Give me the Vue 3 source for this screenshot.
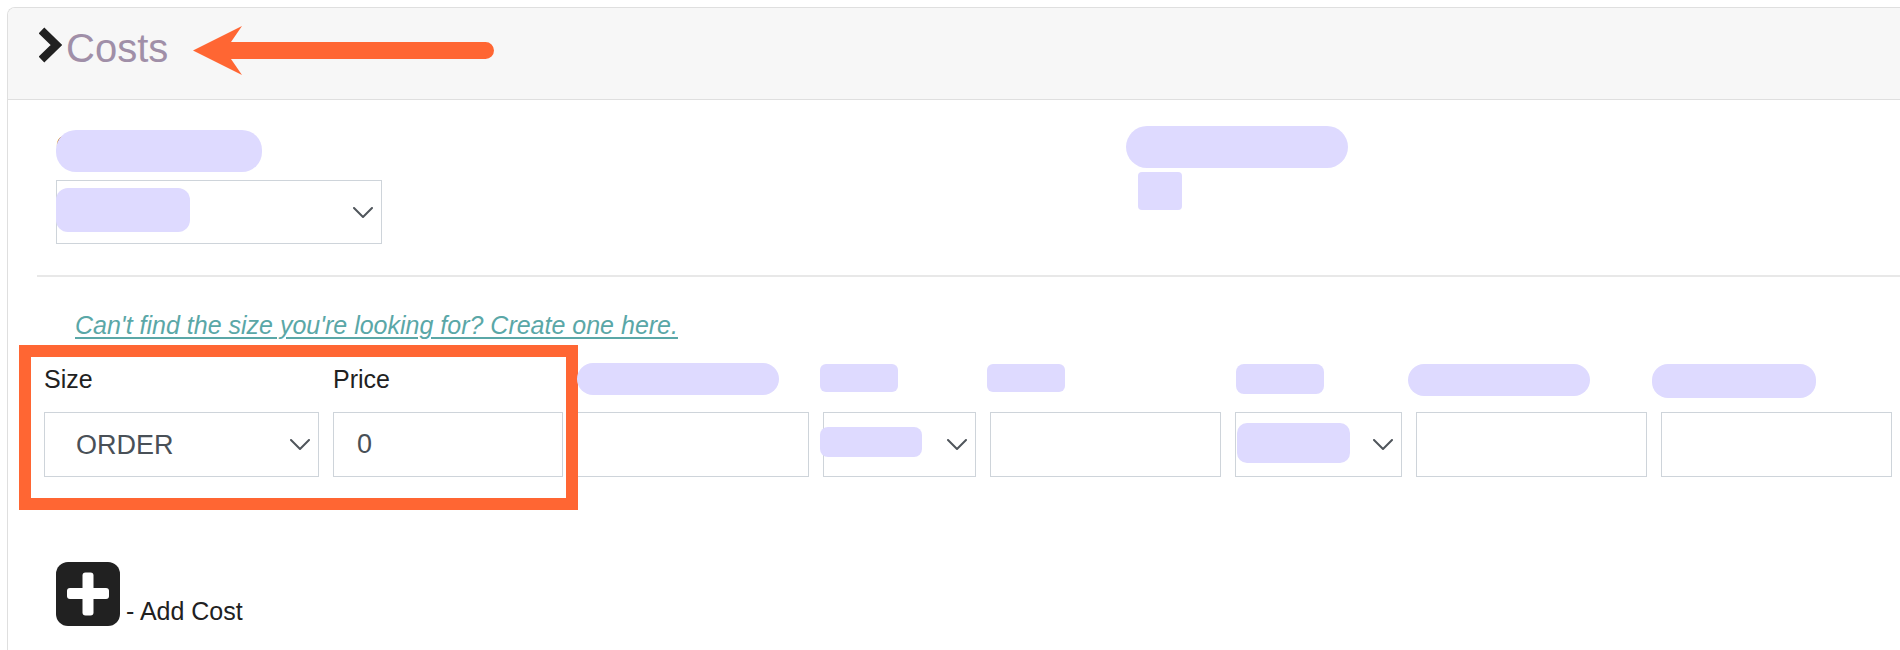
<script setup>
import { ref } from 'vue'

const size = ref('ORDER')
const price = ref('0')

const maskedFields = [
  { id: 'c', kind: 'input', label: 'label-a' },
  { id: 'd', kind: 'select', label: 'label-b', value: 'value-b' },
  { id: 'e', kind: 'input', label: 'label-c' },
  { id: 'f', kind: 'select', label: 'label-d', value: 'value-d' },
  { id: 'g', kind: 'input', label: 'label-e' },
  { id: 'h', kind: 'input', label: 'label-f' },
]
</script>

<template>
  <main class="card">
    <header class="card-header">
      <svg class="caret" viewBox="0 0 24 36" aria-hidden="true">
        <path d="M2.5 3.5 L17.5 18 L2.5 32.5" fill="none" stroke="#212121" stroke-width="8" />
      </svg>
      <h1>Costs</h1>
      <svg class="arrow" viewBox="0 0 302 50" aria-hidden="true">
        <path d="M0 24.5 L49 0 L38 16 H292.5 A8.5 8.5 0 0 1 292.5 33 H38 L49 49 Z" fill="#ff6633" />
      </svg>
    </header>

    <section class="summary">
      <div class="summary-field">
        <label class="summary-label" for="summary-select">C<span class="mask pill"></span></label>
        <div class="control">
          <select id="summary-select" class="box"><option></option></select>
          <svg class="chevron" viewBox="0 0 20 12" aria-hidden="true"><path d="M1 1 L10 10 L19 1" /></svg>
          <span class="mask summary-value"></span>
        </div>
      </div>
      <div class="summary-side">
        <span class="mask-block side-label"></span>
        <span class="mask-block side-value"></span>
      </div>
    </section>

    <section class="costs">
      <a class="create-link" href="#">Can't find the size you're looking for? Create one here.</a>

      <div class="cost-row">
        <div class="field">
          <label for="size">Size</label>
          <div class="control">
            <select id="size" v-model="size" class="box"><option>ORDER</option></select>
            <svg class="chevron" viewBox="0 0 20 12" aria-hidden="true"><path d="M1 1 L10 10 L19 1" /></svg>
          </div>
        </div>
        <div class="field">
          <label for="price">Price</label>
          <div class="control"><input id="price" v-model="price" class="box" type="text" /></div>
        </div>
        <div class="highlight"></div>

        <div v-for="field in maskedFields" :key="field.id" class="field">
          <label :for="'field-' + field.id"><span class="mask" :class="field.label"></span></label>
          <div class="control">
            <template v-if="field.kind === 'select'">
              <select :id="'field-' + field.id" class="box"><option></option></select>
              <svg class="chevron" viewBox="0 0 20 12" aria-hidden="true"><path d="M1 1 L10 10 L19 1" /></svg>
              <span class="mask" :class="field.value"></span>
            </template>
            <input v-else :id="'field-' + field.id" class="box" type="text" />
          </div>
        </div>
      </div>

      <button class="add" type="button">
        <svg viewBox="0 0 64 64" aria-hidden="true">
          <rect width="64" height="64" rx="12" fill="#212121" />
          <rect x="11" y="26" width="42" height="11" rx="3" fill="#fff" />
          <rect x="26.5" y="10.5" width="11" height="43" rx="3" fill="#fff" />
        </svg>
        <span>- Add Cost</span>
      </button>
    </section>
  </main>
</template>

<style>
body {
  margin: 0;
  background: #fff;
  overflow: hidden;
}
</style>

<style scoped>
* {
  box-sizing: border-box;
}

.card {
  margin: 7px 0 0 7px;
  min-height: calc(100vh - 7px);
  border: 1px solid #dfdfdf;
  border-right: 0;
  border-bottom: 0;
  border-top-left-radius: 8px;
  overflow: hidden;
  color: #212121;
  font: 25px/30px "Liberation Sans", Arial, sans-serif;
}

.card-header {
  display: flex;
  padding: 16px 31px 27px;
  background: #f7f7f7;
  border-bottom: 1px solid #dfdfdf;
}

.caret {
  width: 24px;
  height: 36px;
  margin-top: 3px;
}

h1 {
  margin: 0 0 0 3px;
  font-size: 40px;
  line-height: 48px;
  font-weight: 400;
  color: #a08fa8;
}

.arrow {
  width: 302px;
  height: 50px;
  margin: 2px 0 -4px 25px;
}

.summary {
  display: grid;
  grid-template-columns: 1070fr 774fr;
  margin-left: 29px;
  padding: 26px 0 31px 19px;
  border-bottom: 2px solid #e8e8e8;
}

.summary-field {
  width: 326px;
  padding-top: 4px;
}

.summary-label {
  display: block;
  position: relative;
  height: 42px;
  margin-bottom: 8px;
}

.control {
  position: relative;
}

.box {
  display: block;
  width: 100%;
  height: 65px;
  margin: 0;
  padding: 0 23px;
  border: 1px solid #ced4da;
  border-radius: 0;
  background: #fff;
  color: #495057;
  font: 27px/32px "Liberation Sans", Arial, sans-serif;
  appearance: none;
  outline: 0;
}

select.box {
  padding: 0 31px;
}

.summary .box {
  height: 64px;
}

.chevron {
  position: absolute;
  top: 27px;
  right: 9px;
  width: 20px;
  height: 12px;
  fill: none;
  stroke: #50565c;
  stroke-width: 2;
  stroke-linecap: round;
  stroke-linejoin: round;
  pointer-events: none;
}

.mask {
  position: absolute;
  z-index: 2;
  background: #dedaff;
  pointer-events: none;
}

.mask-block {
  display: block;
  background: #dedaff;
}

.pill {
  inset: 0 auto 0 0;
  width: 206px;
  border-radius: 20px;
}

.summary-value {
  top: 8px;
  left: 0;
  width: 134px;
  height: 44px;
  border-radius: 12px;
}

.side-label {
  width: 222px;
  height: 42px;
  border-radius: 21px;
}

.side-value {
  width: 44px;
  height: 38px;
  margin: 4px 0 0 12px;
  border-radius: 4px;
}

.costs {
  padding: 33px 8px 24px 36px;
}

.create-link {
  display: block;
  width: fit-content;
  margin: 0 0 24px 31px;
  color: #5aa7a7;
  font-style: italic;
  text-decoration-thickness: 2px;
  text-underline-offset: 3px;
}

.cost-row {
  position: relative;
  display: grid;
  grid-template-columns: 275fr 230fr 232fr 153fr 231fr 167fr 231fr 231fr;
  column-gap: 14px;
}

.field {
  position: relative;
  min-width: 0;
}

.field > label {
  display: block;
  height: 30px;
  margin-bottom: 18px;
}

.highlight {
  position: absolute;
  z-index: 1;
  grid-column: 1 / 3;
  inset: -19px -15px -33px -25px;
  border: 12px solid #ff6633;
  pointer-events: none;
}

.label-a {
  top: -1px;
  left: 0;
  width: 202px;
  height: 32px;
  border-radius: 16px;
}

.label-b,
.label-c {
  top: 0;
  left: -3px;
  width: 78px;
  height: 28px;
  border-radius: 6px;
}

.label-d {
  top: 0;
  left: 1px;
  width: 88px;
  height: 30px;
  border-radius: 8px;
}

.label-e {
  top: 0;
  left: -8px;
  width: 182px;
  height: 32px;
  border-radius: 16px;
}

.label-f {
  top: 0;
  left: -9px;
  width: 164px;
  height: 34px;
  border-radius: 16px;
}

.value-b {
  top: 15px;
  left: -3px;
  width: 102px;
  height: 30px;
  border-radius: 8px;
}

.value-d {
  top: 11px;
  left: 2px;
  width: 113px;
  height: 40px;
  border-radius: 10px;
}

.add {
  display: flex;
  align-items: flex-end;
  gap: 6px;
  margin: 85px 0 0 12px;
  padding: 0;
  border: 0;
  background: none;
  color: inherit;
  font: inherit;
  cursor: pointer;
}

.add svg {
  width: 64px;
  height: 64px;
}
</style>
